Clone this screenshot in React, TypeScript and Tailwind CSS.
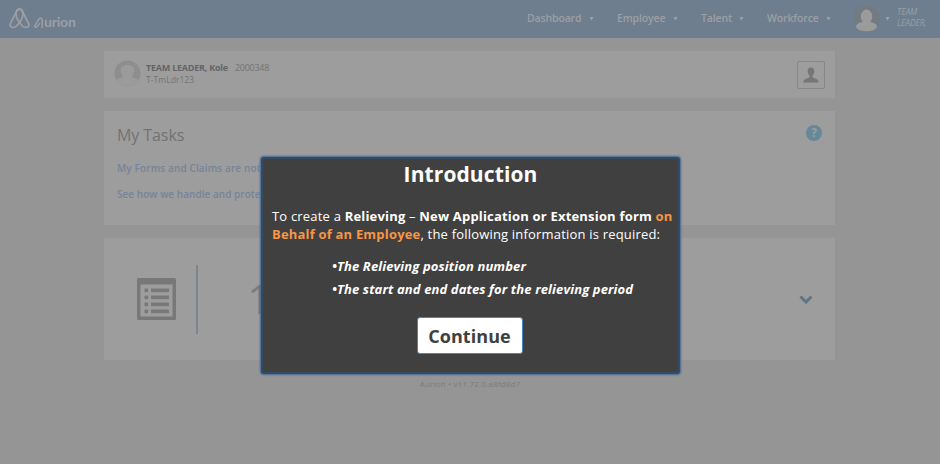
import React from "react";

function Caret() {
  return (
    <svg width="5" height="4" viewBox="0 0 5 4" fill="#9c9fa3">
      <path d="M.5 0h4L2.500 3.800z" />
    </svg>
  );
}

function NavItem({ label, className }: { label: string; className: string }) {
  return (
    <div className={`flex shrink-0 items-center justify-between whitespace-nowrap ${className}`}>
      <span>{label}</span>
      <Caret />
    </div>
  );
}

function Logo() {
  return (
    <svg width="21" height="21" viewBox="0 0 21 21" fill="none" stroke="#9c9fa3" strokeWidth="1.7">
      <path d="M7.500 3.400C8.500.4 12.500.4 13.500 3.400L19.600 15.600c1.200 2.800-1.200 3.900-3.200 3.900-2 0-3.400-1.500-4.600-3.200L8.600 11.600C7.300 9.400 6.800 6 7.500 3.400z" />
      <path d="M13.500 3.400C12.500.4 8.500.4 7.500 3.400L1.400 15.600c-1.200 2.800 1.200 3.900 3.200 3.900 2 0 3.400-1.500 4.600-3.200L12.400 11.600C13.700 9.400 14.200 6 13.500 3.400z" />
    </svg>
  );
}

function Header() {
  return (
    <header className="flex h-[38px] bg-[#6e7e8f] text-[10.5px] font-semibold leading-[15px] text-[#9c9fa3]">
      <div className="flex w-[527px] shrink-0 pl-[9px] pt-[8px]">
        <Logo />
        <div className="ml-[4px] mt-[5px] flex h-[18px] items-center font-[Lato,sans-serif] text-[14px] font-bold leading-[18px] tracking-[-0.2px]">
          <svg width="9" height="11" viewBox="0 0 9 11" fill="none" stroke="#9c9fa3" strokeWidth="1.5" className="mr-px mt-px">
            <path d="M8.200 11V3.200C8.200.4 6 .3 4.800 2.300L1 8.400c-.9 1.500.8 2.400 1.800 1.300L6 6.200" />
          </svg>
          urion
        </div>
      </div>
      <div className="flex h-[37px] items-center tracking-[-0.14px]">
        <NavItem label="Dashboard" className="mr-[23px] w-[67px]" />
        <NavItem label="Employee" className="mr-[23px] w-[61px]" />
        <NavItem label="Talent" className="mr-[23px] w-[43px]" />
        <NavItem label="Workforce" className="w-[64px]" />
        <svg width="27" height="27" viewBox="0 0 27 27" className="ml-[22px]">
          <circle cx="13.5" cy="13.5" r="13" fill="#727a82" />
          <ellipse cx="13.5" cy="11.5" rx="5.7" ry="7" fill="#9b9b9b" />
          <ellipse cx="13.5" cy="21.5" rx="10.5" ry="4.8" fill="#9b9b9b" />
        </svg>
        <div className="ml-[5px] flex items-center gap-[7px]">
          <Caret />
          <div className="mt-[-4px] text-[8.5px] font-normal italic leading-[11px] tracking-[-0.1px]">
            TEAM
            <br />
            LEADER,
          </div>
        </div>
      </div>
    </header>
  );
}

function ProfileCard() {
  return (
    <section className="flex h-[47px] items-start bg-[#9d9d9d] pl-[10px] pr-[10px] pt-[9px]">
      <svg width="27" height="27" viewBox="0 0 27 27">
        <circle cx="13.5" cy="13.5" r="13" fill="#8e8e8e" />
        <path d="M2 21c2-4 7-2 7-5-4-5-3-11 4.500-11s8.500 6 4.500 11c0 3 5 1 7 5-5 7-18 7-23 0z" fill="#9b9b9b" />
      </svg>
      <div className="ml-[5px] mt-[2px] grow text-[9px] leading-[12px] text-[#737373]">
        <div className="flex gap-[7px]">
          <b className="tracking-[-0.23px] text-[#656565]">TEAM LEADER, Kole</b>
          <span className="tracking-[-0.25px]">2000348</span>
        </div>
        <div className="text-[8.500px] tracking-[0.05px]">T-TmLdr123</div>
      </div>
      <div className="mt-[1px] flex size-[28px] items-center justify-center rounded-[2px] border border-[#878787]">
        <svg width="16" height="16" viewBox="0 0 16 16" fill="#767676">
          <path d="M8 .5C5.700.5 4.700 2 4.700 4c0 2.300.8 3.600 1.800 4.700v1.600C4.500 11.500.5 12 .3 15.500h15.400C15.500 12 11.500 11.500 9.500 10.300V8.700C10.500 7.600 11.300 6.300 11.300 4c0-2-1-3.500-3.300-3.500z" />
        </svg>
      </div>
    </section>
  );
}

function TasksCard() {
  return (
    <section className="mt-[13px] flex h-[114px] justify-between bg-[#9d9d9d] pl-[13px] pr-[13px] pt-[13px]">
      <div className="whitespace-nowrap">
        <h1 className="text-[16px] leading-[22px] tracking-[-0.08px] text-[#737373]">My Tasks</h1>
        <div className="mt-[9px] text-[10px] font-semibold leading-[26px] text-[#758498]">
          <p className="tracking-[0.12px]">My Forms and Claims are not currently available</p>
          <p className="tracking-[0.04px]">See how we handle and protect your data</p>
        </div>
      </div>
      <div className="mt-px flex size-4 items-center justify-center rounded-full bg-[#66899a] text-[12px] font-bold leading-4 text-[#9d9d9d]">
        ?
      </div>
    </section>
  );
}

function FormIcon() {
  return (
    <svg width="39" height="42" viewBox="0 0 39 42">
      <rect width="39" height="42" rx="1.500" fill="#787878" />
      <rect x="3.5" y="6.5" width="32" height="32" fill="#9d9d9d" />
      <g fill="#787878">
        {[10.500, 17.500, 24.500, 31.500].map((y) => (
          <React.Fragment key={y}>
            <rect x="7.500" y={y} width="3.700" height="3.700" rx="1" />
            <rect x="14" y={y} width="18" height="3.700" />
          </React.Fragment>
        ))}
      </g>
    </svg>
  );
}

function SummaryCard() {
  return (
    <section className="mt-[13px] flex h-[122px] items-center bg-[#9d9d9d] pl-[33px] pr-[22px]">
      <FormIcon />
      <div className="ml-[20px] h-[69px] w-[1.5px] bg-[#7d858e]" />
      <div className="ml-[50px] grow text-[40px] leading-[42px] text-[#777d82]">1</div>
      <svg width="14" height="9" viewBox="0 0 14 9" fill="none" stroke="#607481" strokeWidth="3">
        <path d="M1.500 1.500 7 7l5.500-5.500" />
      </svg>
    </section>
  );
}

function Introduction() {
  return (
    <div
      role="dialog"
      className="absolute left-[261px] top-[157px] flex h-[217px] w-[419px] flex-col items-center rounded-[3px] border-2 border-[#344b61] bg-[#404040] text-white shadow-[0_0_2px_1px_#426993]"
    >
      <h2 className="mt-[1px] text-[21px] font-bold leading-[28px] tracking-[0.1px]">Introduction</h2>
      <div className="mt-[19px] w-full whitespace-nowrap pl-[9px] text-[13px] leading-[18px]">
        <p className="tracking-[0.19px]">
          To create a <b>Relieving</b> – <b>New Application or Extension form <span className="text-[#f79646]">on</span></b>
        </p>
        <p className="tracking-[0.19px]">
          <b className="text-[#f79646]">Behalf of an Employee</b>, the following information is required:
        </p>
      </div>
      <div className="mt-[12px] w-full whitespace-nowrap pl-[69px] text-[13px] font-bold italic leading-[23px] tracking-[0.12px]">
        <p>•The Relieving position number</p>
        <p>•The start and end dates for the relieving period</p>
      </div>
      <button className="mr-[2px] mt-[16px] h-[37px] w-[106px] rounded-[3px] border border-[#4687bb] bg-white pt-[2px] text-[18px] font-bold leading-[33px] tracking-[0.05px] text-[#404040]">
        Continue
      </button>
    </div>
  );
}

export default function App() {
  return (
    <div className="relative h-[464px] w-[940px] overflow-hidden bg-[#959595] font-['Open_Sans',sans-serif]">
      <Header />
      <main className="ml-[104px] mt-[13px] w-[731px]">
        <ProfileCard />
        <TasksCard />
        <SummaryCard />
      </main>
      <footer className="mt-[18px] text-center text-[8px] leading-[12px] tracking-[0.18px] text-[#7b7b7b]">Aurion • v11.72.0.a8fd8d7</footer>
      <Introduction />
    </div>
  );
}
